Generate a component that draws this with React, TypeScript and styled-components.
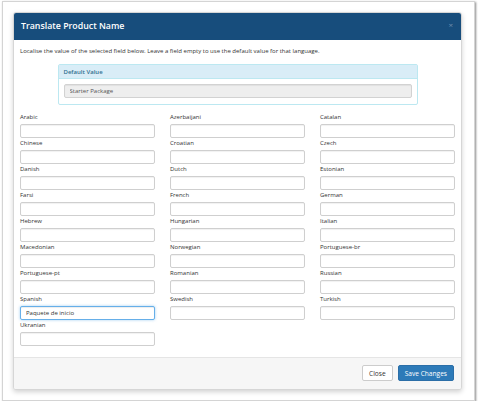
import { useState } from 'react'
import styled, { createGlobalStyle } from 'styled-components'

const languages = [
  'Arabic', 'Azerbaijani', 'Catalan',
  'Chinese', 'Croatian', 'Czech',
  'Danish', 'Dutch', 'Estonian',
  'Farsi', 'French', 'German',
  'Hebrew', 'Hungarian', 'Italian',
  'Macedonian', 'Norwegian', 'Portuguese-br',
  'Portuguese-pt', 'Romanian', 'Russian',
  'Spanish', 'Swedish', 'Turkish',
  'Ukranian'
]

const GlobalStyle = createGlobalStyle`
  html, body {
    margin: 0;
    background: #fff;
  }
  body {
    font-family: "Open Sans", "Liberation Sans", sans-serif;
    font-size: 6px;
    color: #333;
  }
  * {
    box-sizing: border-box;
  }
`

export default function App() {
  const [values, setValues] = useState<Record<string, string>>({ Spanish: 'Paquete de inicio' })

  return (
    <>
      <GlobalStyle />
      <Frame>
        <Modal>
          <Header>
            <Title>Translate Product Name</Title>
            <CloseX>×</CloseX>
          </Header>
          <Body>
            <Intro>
              Localise the value of the selected field below. Leave a field empty to use the default value for that language.
            </Intro>
            <Panel>
              <PanelHeading>Default Value</PanelHeading>
              <PanelBody>
                <Field value="Starter Package" readOnly disabled />
              </PanelBody>
            </Panel>
            <Grid>
              {languages.map((lang) => (
                <Cell key={lang}>
                  <Label>{lang}</Label>
                  <Field
                    $focused={lang === 'Spanish'}
                    value={values[lang] ?? ''}
                    onChange={(e) => setValues({ ...values, [lang]: e.target.value })}
                  />
                </Cell>
              ))}
            </Grid>
          </Body>
          <Footer>
            <Button>Close</Button>
            <Button $primary>Save Changes</Button>
          </Footer>
        </Modal>
      </Frame>
    </>
  )
}

const Frame = styled.div`
  width: 473px;
  height: 400px;
  margin: 1px 0 0 2px;
  padding: 10px 11px 0 10px;
  border: 1px solid #d4d4d4;
  box-shadow: 1px 1px 2px rgba(0, 0, 0, 0.45);
  background: #fff;
`

const Modal = styled.div`
  width: 449px;
  border: 1px solid #d6d6d6;
  border-radius: 3px;
  overflow: hidden;
  background: #fff;
  box-shadow: 0 2px 5px rgba(0, 0, 0, 0.18);
`

const Header = styled.div`
  display: flex;
  align-items: center;
  justify-content: space-between;
  height: 28px;
  margin: -1px -1px 0;
  padding: 0 9px 0 8px;
  background: #174d7c;
`

const Title = styled.h4`
  margin: 0;
  font-size: 8.8px;
  font-weight: 600;
  color: #fff;
`

const CloseX = styled.span`
  font-size: 8px;
  line-height: 1;
  color: #6f8fae;
  margin-top: -2px;
`

const Body = styled.div`
  padding: 6px 6px 11px;
`

const Intro = styled.p`
  margin: 0 0 8px;
  font-size: 6px;
  line-height: 10px;
  color: #333;
`

const Panel = styled.div`
  width: 360px;
  margin: 0 auto;
  border: 1px solid #bce8f1;
  border-radius: 2px;
`

const PanelHeading = styled.div`
  height: 14px;
  padding: 0 5px;
  display: flex;
  align-items: center;
  background: #d9edf7;
  border-bottom: 1px solid #bce8f1;
  color: #31708f;
  font-size: 6px;
  font-weight: 600;
`

const PanelBody = styled.div`
  display: flex;
  padding: 5px 5px 6px;
`

const Grid = styled.div`
  display: grid;
  grid-template-columns: repeat(3, 1fr);
  column-gap: 15px;
  row-gap: 1px;
  margin-top: 8px;
`

const Cell = styled.div`
  display: flex;
  flex-direction: column;
`

const Label = styled.label`
  height: 9px;
  margin-bottom: 2px;
  font-size: 6px;
  line-height: 9px;
  color: #333;
`

const Field = styled.input<{ $focused?: boolean }>`
  display: block;
  width: 100%;
  height: 14px;
  padding: 0 5px;
  font-family: inherit;
  font-size: 6px;
  color: #333;
  background: #fff;
  border: 1px solid ${(p) => (p.$focused ? '#66afe9' : '#cfcfcf')};
  border-radius: 2px;
  box-shadow: ${(p) =>
    p.$focused
      ? 'inset 0 1px 1px rgba(0,0,0,.075), 0 0 3px rgba(102,175,233,.6)'
      : 'inset 0 1px 1px rgba(0,0,0,.06)'};
  outline: none;

  &:disabled {
    background: #eeeeee;
    color: #555;
    border-color: #d2d2d2;
  }
`

const Footer = styled.div`
  display: flex;
  justify-content: flex-end;
  gap: 5px;
  height: 32px;
  padding: 7px 7px 0;
  border-top: 1px solid #e5e5e5;
  background: #f6f6f6;
`

const Button = styled.button<{ $primary?: boolean }>`
  height: 16px;
  padding: 0 6px;
  font-family: inherit;
  font-size: 6.6px;
  border-radius: 2px;
  border: 1px solid ${(p) => (p.$primary ? '#2b6ea7' : '#ccc')};
  background: ${(p) => (p.$primary ? '#2d7ab8' : '#fff')};
  color: ${(p) => (p.$primary ? '#fff' : '#333')};
  cursor: pointer;
`
